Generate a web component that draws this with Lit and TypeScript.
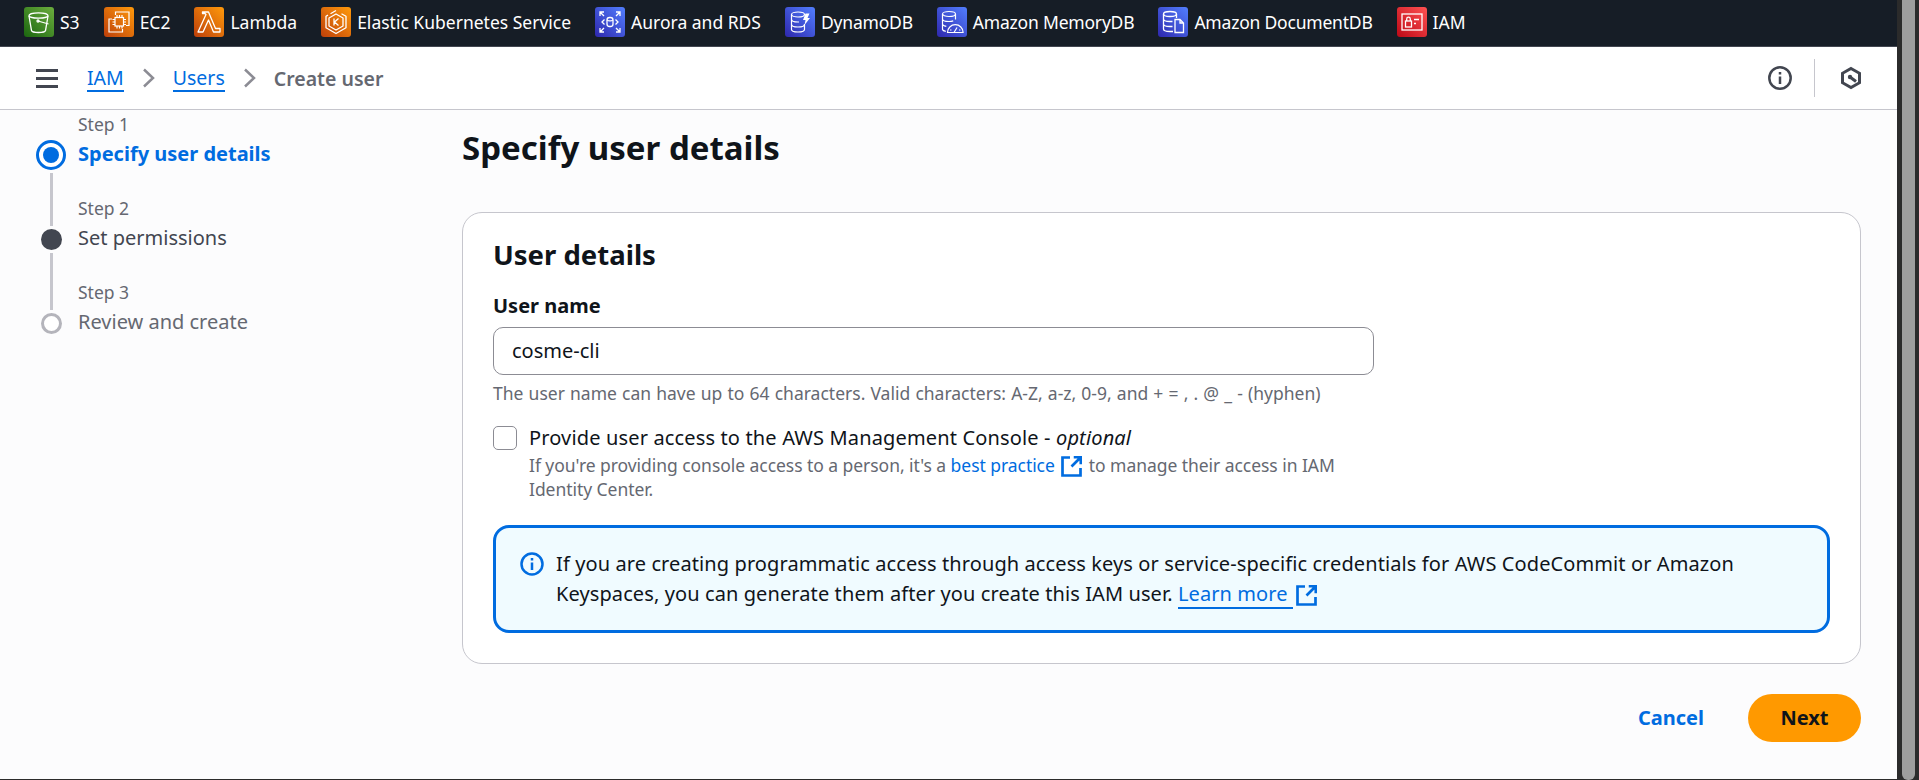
import { LitElement, html, css, svg } from 'lit';
import { customElement } from 'lit/decorators.js';

const icons: Record<string, unknown> = {
  s3: svg`<g fill="none" stroke="#fff" stroke-width="1.300"><ellipse cx="14.500" cy="8.500" rx="9.500" ry="2.700"/><path d="M5 9l2.500 14.500c.3 1.300 3.300 2 7 2s6.700-.7 7-2L24 9"/><circle cx="14" cy="14" r="1"/><path d="M14 14l10.500 3"/></g>`,
  ec2: svg`<g fill="none" stroke="#fff" stroke-width="1.200"><path d="M11.500 8V5H25v13.500h-3"/><path d="M8 12H5v13h13.500v-3"/><rect x="11" y="10.500" width="8.500" height="8.500"/><path d="M8.500 12.500H11M8.500 15H11M8.500 17.500H11M19.500 12.500H22M19.500 15H22M19.500 17.500H22M13 8v2.500M15.500 8v2.500M18 8v2.500M13 19v2.500M15.500 19v2.500M18 19v2.500"/></g>`,
  lambda: svg`<path d="M8.500 5h6l7 16.500H26V25h-6.500l-5-12-5.500 12H4l8-17.500-1-1H8.500z" fill="none" stroke="#fff" stroke-width="1.300" stroke-linejoin="round"/>`,
  eks: svg`<g fill="none" stroke="#fff" stroke-width="1.300" stroke-linejoin="round"><path d="M15 3.500l-5.500 3.200M20.500 6.700l4.500 2.600v11.400L15 26.500 5 20.700V9.300l2-1.200"/><path d="M15 7l7 4v8l-7 4-7-4v-8z"/><path d="M13 11.500v7M17.500 11.500L13.500 15l4 3.500"/></g>`,
  aurora: svg`<g fill="none" stroke="#fff" stroke-width="1.300"><rect x="12" y="10.500" width="6" height="9" rx="2.500"/><path d="M12 13c1.500 1 4.500 1 6 0"/><path d="M5 9V5h4M5 5l4 4M25 9V5h-4M25 5l-4 4M5 21v4h4M5 25l4-4M25 21v4h-4M25 25l-4-4"/><path d="M9.500 12.500L7 15l2.500 2.500M20.500 12.500L23 15l-2.500 2.500"/></g>`,
  dynamo: svg`<g fill="none" stroke="#fff" stroke-width="1.200"><ellipse cx="13" cy="7.500" rx="6.500" ry="2.500"/><path d="M6.500 7.500v15c0 1.500 2.900 2.500 6.500 2.500s6.500-1 6.500-2.500V17"/><path d="M6.500 12.500c0 1.500 2.900 2.500 6.500 2.500h1M6.500 17.500c0 1.500 2.900 2.500 6.500 2.500s6.500-1 6.500-2.500"/></g><path d="M20.500 6.500h4l-2 4.500h2.500l-5.500 7 1-5h-2.500z" fill="#fff"/>`,
  memory: svg`<g fill="none" stroke="#fff" stroke-width="1.200"><ellipse cx="12" cy="7" rx="6.500" ry="2.500"/><path d="M5.500 7v15.500c.2 .9 1.500 1.600 3.300 1.900M18.500 7v5.500M5.500 12c0 1.500 2.900 2.500 6.500 2.500 1.500 0 3-.2 4.200-.6M5.500 17c0 1.100 1.500 1.900 3.800 2.300"/><path d="M10.500 25.500a7.800 7.800 0 0 1 15.600 0z"/><path d="M17 25.500l3-5M13 23h1.500M22 23h1.500"/></g>`,
  docdb: svg`<g fill="none" stroke="#fff" stroke-width="1.300"><ellipse cx="12" cy="7" rx="6.500" ry="2.500"/><path d="M5.500 7v15c0 1.500 2.900 2.500 6.500 2.500h3M18.500 7v4M5.500 12c0 1.500 2.900 2.500 6.500 2.500h2.500M5.500 17c0 1.500 2.900 2.500 6.500 2.500h2.500"/><path d="M17 12.500h5l3.500 3.500v9.500H17zM22 12.500V16h3.500"/></g>`,
  iam: svg`<g fill="none" stroke="#fff" stroke-width="1.300"><rect x="5" y="7" width="20" height="16"/><rect x="8.500" y="14" width="6" height="6"/><path d="M9.700 14v-2a1.800 1.800 0 0 1 3.600 0v2M17 12.500h5M17 16.500h2"/></g>`
};

const services = [
  { label: 'S3', icon: 's3', color: 'green', tight: false },
  { label: 'EC2', icon: 'ec2', color: 'orange', tight: false },
  { label: 'Lambda', icon: 'lambda', color: 'orange', tight: false },
  { label: 'Elastic Kubernetes Service', icon: 'eks', color: 'orange', tight: false },
  { label: 'Aurora and RDS', icon: 'aurora', color: 'blue', tight: false },
  { label: 'DynamoDB', icon: 'dynamo', color: 'blue', tight: true },
  { label: 'Amazon MemoryDB', icon: 'memory', color: 'blue', tight: true },
  { label: 'Amazon DocumentDB', icon: 'docdb', color: 'blue', tight: true },
  { label: 'IAM', icon: 'iam', color: 'red', tight: false }
];

const steps = [
  { step: 'Step 1', name: 'Specify user details', state: 'active' },
  { step: 'Step 2', name: 'Set permissions', state: 'upcoming' },
  { step: 'Step 3', name: 'Review and create', state: 'muted' }
];

const externalIcon = html`<svg class="ext" viewBox="1 1 14 14" fill="none" stroke="currentColor" stroke-width="1.800"><path d="M7 2H2v12h12V9"/><path d="M9.500 1.800h4.700v4.700M14 2L8 8"/></svg>`;

const chevron = html`<svg class="chev" viewBox="0 0 14 20" fill="none" stroke="currentColor" stroke-width="2.500"><path d="M2 1.500l9 8.500-9 8.500"/></svg>`;

@customElement('app-root')
export class AppRoot extends LitElement {
  static styles = css`
    :host {
      display: block;
      width: 1919px;
      height: 780px;
      overflow: hidden;
      font-family: 'Noto Sans', sans-serif;
      color: #0f141a;
    }
    .frame { display: flex; height: 780px; background: #2b2b2b; }
    .page { width: 1897px; height: 779px; background: #fcfcfd; flex: none; }
    .scroll { width: 22px; padding-left: 5px; box-sizing: border-box; }
    .thumb { width: 13px; height: 780px; background: #9e9e9e; border-radius: 0 0 6px 6px; }

    .services { height: 47px; box-sizing: border-box; background: #161d26; display: flex; align-items: center; padding: 0 0 2px 24px; gap: 24px; border-bottom: 1px solid #424650; }
    .service { display: flex; align-items: center; gap: 6px; color: #fff; font-size: 17.500px; }
    .service.tight { letter-spacing: -0.2px; }
    .label { margin-bottom: 1px; }
    .tile { width: 30px; height: 30px; border-radius: 3px; display: flex; }
    .tile.green { background: linear-gradient(45deg, #1b660f, #6cae3e); }
    .tile.orange { background: linear-gradient(45deg, #bd3f0a, #ff9a0b); }
    .tile.blue { background: linear-gradient(45deg, #2e27ad, #527fff); }
    .tile.red { background: linear-gradient(45deg, #bd0816, #ff5252); }
    .tile svg { width: 30px; height: 30px; }

    .crumbs { height: 63px; box-sizing: border-box; background: #fff; display: flex; align-items: center; border-bottom: 1px solid #c6c6cd; padding-left: 36px; font-size: 19.500px; }
    .burger { width: 22px; height: 19px; display: flex; flex-direction: column; justify-content: space-between; margin-right: 29px; }
    .burger i { height: 3px; background: #424650; display: block; }
    .crumbs a { color: #006ce0; border-bottom: 2px solid #006ce0; line-height: 24px; margin-top: 2px; }
    .chev { width: 14px; height: 20px; margin: 0 17px 0 18px; color: #8c8c94; }
    .current { color: #656871; font-weight: 600; }
    .tools { margin-left: auto; display: flex; align-items: center; margin-right: 34px; }
    .tools svg { width: 24px; height: 24px; }
    .divider { width: 1px; height: 38px; background: #c6c6cd; margin: 0 24px 0 22px; }

    .body { display: flex; }
    .steps { width: 462px; padding: 3px 0 0 36px; box-sizing: border-box; }
    .step { display: grid; grid-template-columns: 30px 1fr; grid-template-rows: 22px 62px; column-gap: 12px; }
    .step small { grid-column: 2; grid-row: 1; font-size: 17.500px; color: #656871; line-height: 22px; }
    .node { grid-column: 1; grid-row: 2; position: relative; display: flex; justify-content: center; align-items: flex-start; }
    .name { grid-column: 2; grid-row: 2; font-size: 20px; line-height: 26px; margin-top: 6px; color: #424650; }
    .active .name { color: #006ce0; font-weight: 700; }
    .muted .name { color: #656871; }
    .dot { width: 21px; height: 21px; border-radius: 50%; background: #424650; box-sizing: border-box; margin-top: 10px; }
    .active .dot { width: 30px; height: 30px; margin-top: 5px; border: 3px solid #006ce0; background: #fff; padding: 4px; }
    .active .dot::after { content: ''; display: block; width: 16px; height: 16px; background: #006ce0; border-radius: 50%; }
    .muted .dot { background: #fff; border: 3px solid #b4b4bb; }
    .line { position: absolute; top: 34px; left: 14px; width: 3px; height: 57px; background: #c6c6cd; }
    .active .line { top: 38px; height: 53px; }

    main { width: 1399px; }
    h1 { margin: 0 0 44px; font-size: 33px; font-weight: 700; line-height: 40px; padding-top: 18px; }
    .card { background: #fff; border: 1px solid #c6c6cd; border-radius: 20px; padding: 24px 30px 0; height: 452px; box-sizing: border-box; }
    h2 { margin: 0; font-size: 27.500px; font-weight: 700; line-height: 36px; }
    .title { display: block; font-weight: 700; font-size: 20px; line-height: 24px; margin-top: 21px; }
    .input { width: 881px; height: 48px; box-sizing: border-box; border: 1px solid #8c8c94; border-radius: 10px; margin-top: 9px; padding: 0 0 2px 18px; display: flex; align-items: center; font-size: 20px; }
    .hint { font-size: 17.500px; line-height: 24px; color: #656871; margin-top: 6px; }
    .hint.wide { word-spacing: 0.6px; }
    .check { display: flex; margin-top: 21px; gap: 12px; }
    .box { width: 24px; height: 24px; box-sizing: border-box; border: 1px solid #8c8c94; border-radius: 5px; flex: none; }
    .check p { margin: 0; font-size: 20px; line-height: 24px; letter-spacing: 0.15px; }
    .check .hint { width: 844px; margin-top: 3px; letter-spacing: -0.05px; }
    .hint a { color: #006ce0; }
    .hint .ext { width: 21px; height: 21px; vertical-align: -5px; margin: 0 2px; }
    .alert { margin-top: 24px; background: #f0fbff; border: 3px solid #006ce0; border-radius: 16px; height: 108px; box-sizing: border-box; padding: 21px 24px 0; display: flex; gap: 12px; }
    .info { width: 24px; height: 24px; flex: none; margin-top: 3px; }
    .alert p { margin: 0; font-size: 20px; line-height: 30px; width: 1240px; letter-spacing: 0.1px; }
    .alert a { color: #006ce0; border-bottom: 2px solid #006ce0; }
    .alert .ext { color: #006ce0; width: 21px; height: 21px; vertical-align: -5px; margin-left: 3px; }
    .actions { display: flex; justify-content: flex-end; align-items: center; gap: 44px; margin-top: 30px; font-size: 20px; font-weight: 700; }
    .cancel { color: #006ce0; margin-bottom: 2px; }
    .next { width: 113px; height: 48px; box-sizing: border-box; padding-bottom: 2px; border-radius: 24px; background: #ff9900; display: flex; align-items: center; justify-content: center; }
  `;

  render() {
    return html`
      <div class="frame">
        <div class="page">
          <nav class="services">
            ${services.map(s => html`
              <div class="service ${s.tight ? 'tight' : ''}">
                <span class="tile ${s.color}"><svg viewBox="0 0 30 30">${icons[s.icon]}</svg></span>
                <span class="label">${s.label}</span>
              </div>`)}
          </nav>
          <div class="crumbs">
            <div class="burger"><i></i><i></i><i></i></div>
            <a>IAM</a>
            ${chevron}
            <a>Users</a>
            ${chevron}
            <span class="current">Create user</span>
            <div class="tools">
              <svg viewBox="0 0 24 24" fill="none" stroke="#424650" stroke-width="2.500"><circle cx="12" cy="12" r="10.700"/><path d="M12 10.500V18M12 6v2.500"/></svg>
              <span class="divider"></span>
              <svg viewBox="0 0 24 24" fill="none" stroke="#424650" stroke-width="3"><path d="M12 2.500l8.500 4.800v9.400L12 21.500l-8.500-4.800V7.300z"/><circle cx="11" cy="11" r="2.200" fill="#424650" stroke="none"/><path d="M11 11l6 4.500"/></svg>
            </div>
          </div>
          <div class="body">
            <aside class="steps">
              ${steps.map((s, i) => html`
                <div class="step ${s.state}">
                  <small>${s.step}</small>
                  <div class="node"><span class="dot"></span>${i < 2 ? html`<span class="line"></span>` : ''}</div>
                  <div class="name">${s.name}</div>
                </div>`)}
            </aside>
            <main>
              <h1>Specify user details</h1>
              <section class="card">
                <h2>User details</h2>
                <label class="title">User name</label>
                <div class="input">cosme-cli</div>
                <div class="hint wide">The user name can have up to 64 characters. Valid characters: A-Z, a-z, 0-9, and + = , . @ _ - (hyphen)</div>
                <div class="check">
                  <span class="box"></span>
                  <div>
                    <p>Provide user access to the AWS Management Console - <em>optional</em></p>
                    <div class="hint">If you're providing console access to a person, it's a <a>best practice ${externalIcon}</a> to manage their access in IAM Identity Center.</div>
                  </div>
                </div>
                <div class="alert">
                  <svg class="info" viewBox="0 0 24 24" fill="none" stroke="#006ce0" stroke-width="2.500"><circle cx="12" cy="12" r="10.500"/><path d="M12 10.500V18M12 6v2.500"/></svg>
                  <p>If you are creating programmatic access through access keys or service-specific credentials for AWS CodeCommit or Amazon Keyspaces, you can generate them after you create this IAM user. <a>Learn more </a>${externalIcon}</p>
                </div>
              </section>
              <div class="actions"><span class="cancel">Cancel</span><span class="next">Next</span></div>
            </main>
          </div>
        </div>
        <div class="scroll"><div class="thumb"></div></div>
      </div>
    `;
  }
}
